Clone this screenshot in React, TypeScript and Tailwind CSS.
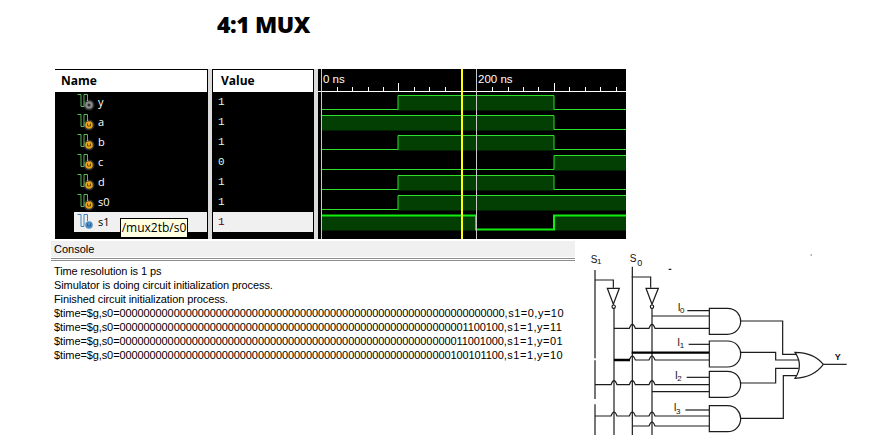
const rows = [
  { name: "y", value: "1", kind: "out" },
  { name: "a", value: "1", kind: "in" },
  { name: "b", value: "1", kind: "in" },
  { name: "c", value: "0", kind: "in" },
  { name: "d", value: "1", kind: "in" },
  { name: "s0", value: "1", kind: "in" },
  { name: "s1", value: "1", kind: "sel" },
];

// level changes per signal, x in page pixels
const waves: { start: number; edges: number[] }[] = [
  { start: 0, edges: [398, 554] },
  { start: 1, edges: [554] },
  { start: 0, edges: [398, 554] },
  { start: 0, edges: [554] },
  { start: 0, edges: [398, 554] },
  { start: 0, edges: [398] },
  { start: 1, edges: [476, 554] },
];

const X0 = 318;
const X1 = 626;
const ticks = [337, 352, 368, 383, 398, 414, 429, 445, 492, 508, 523, 538, 554, 569, 585, 600, 616];

function SignalIcon({ kind }: { kind: string }) {
  const line = kind === "sel" ? "#3f86b8" : "#58b858";
  const fill = kind === "out" ? "#8a8a8a" : kind === "sel" ? "#4f8fc4" : "#e8a41c";
  return (
    <svg width="18" height="18" viewBox="0 0 18 18" className="shrink-0">
      <path d="M0.5 1.5H4V13.5H7V1.5H10.5V8" fill="none" stroke={line} strokeWidth="1" />
      {kind !== "sel" && <circle cx="12" cy="12" r="5.5" fill="#ffffff" opacity="0.18" />}
      <circle cx="12" cy="12" r="3.8" fill={fill} />
      {kind === "out" ? (
        <path d="M10.5 12H13.5M12 10.5V13.5" stroke="#111111" strokeWidth="1" />
      ) : (
        <path d="M10.5 10.5V13H13.5V10.5" fill="none" stroke={kind === "sel" ? "#2d5f8c" : "#6b4a00"} strokeWidth="1" />
      )}
    </svg>
  );
}

function Waveforms() {
  return (
    <svg width="308" height="170" viewBox={`${X0} 69 308 170`} className="block bg-black">
      <text x="323" y="83" fill="#ffffff" fontSize="11.5" fontFamily="'Liberation Sans', sans-serif">0 ns</text>
      <text x="478" y="83" fill="#ffffff" fontSize="11.5" fontFamily="'Liberation Sans', sans-serif">200 ns</text>
      <path d="M318 91.5H626" stroke="#ffffff" />
      {ticks.map((x) => (
        <path key={x} d={`M${x + 0.5} ${x === 398 || x === 554 ? 83 : 87}V91`} stroke="#ffffff" />
      ))}
      {waves.map((w, i) => {
        const hi = 95.5 + i * 20;
        const lo = 109.5 + i * 20;
        const bounds = [X0 + 4, ...w.edges, X1];
        let level = w.start;
        let d = `M${bounds[0]} ${level ? hi : lo}`;
        const fills: { a: number; b: number }[] = [];
        for (let k = 0; k < bounds.length - 1; k++) {
          if (level) fills.push({ a: bounds[k], b: bounds[k + 1] });
          d += `H${bounds[k + 1]}`;
          if (k < bounds.length - 2) {
            level = level ? 0 : 1;
            d += `V${level ? hi : lo}`;
          }
        }
        return (
          <g key={i}>
            {fills.map((f) => (
              <rect key={f.a} x={f.a} y={hi} width={f.b - f.a} height="15" fill="#033f03" />
            ))}
            <path d={d} fill="none" stroke={i === 6 ? "#10ee10" : "#2ce02c"} strokeWidth={i === 6 ? 2 : 1} />
          </g>
        );
      })}
      <path d="M321.5 69V239M476.5 69V239" stroke="#c8c8c8" />
      <rect x="461" y="69" width="2" height="170" fill="#ffff00" />
    </svg>
  );
}

const consoleLines = [
  "Time resolution is 1 ps",
  "Simulator is doing circuit initialization process.",
  "Finished circuit initialization process.",
];

const timeLines = [
  { bits: "0".repeat(64), tail: ",s1=0,y=10" },
  { bits: "0".repeat(57) + "1100100", tail: ",s1=1,y=11" },
  { bits: "0".repeat(56) + "11001000", tail: ",s1=1,y=01" },
  { bits: "0".repeat(55) + "100101100", tail: ",s1=1,y=10" },
];

function hop(x0: number, x1: number, y: number, hops: number[]) {
  let d = `M${x0} ${y}`;
  for (const x of hops) d += `H${x - 9}Q${x} ${y - 24} ${x + 9} ${y}`;
  return d + `H${x1}`;
}

function andGate(top: number) {
  return `M388 ${top}H442C470 ${top} 482 ${top + 22} 482 ${top + 39}C482 ${top + 58} 468 ${top + 78} 442 ${top + 78}H388Z`;
}

// coordinates are three times the page pixels
function Circuit() {
  const wires = [
    "M45 75V340M45 346V462M45 478V570",
    "M157 65V570",
    "M102 190V570",
    "M216 190V570",
    "M45 105H100V128",
    "M155 96H212V128",
    "M322 197H388M216 213H388",
    hop(102, 388, 250, [157, 216]),
    "M326 298H388",
    hop(150, 388, 345, [157, 216]),
    "M320 397H388",
    hop(45, 388, 419, [102, 157, 216]),
    "M216 440H388",
    "M316 495H388",
    hop(45, 388, 513, [102, 157, 216]),
    hop(157, 388, 543, [216]),
    "M482 228H608V328H652",
    "M482 322H587V345H656",
    "M482 414H587V370H656",
    "M482 520H610V392H652",
    "M730 358H800",
    "M266 73H274M692 30H695",
  ];
  const label = "'Liberation Sans', sans-serif";
  return (
    <svg width="290" height="193" viewBox="0 0 870 579" className="mt-[4px] block shrink-0">
      <g fill="none" stroke="#1c1c1c" strokeWidth="3.6">
        {wires.map((d) => (
          <path key={d} d={d} />
        ))}
        <path d="M155 323H388M102 345H150" strokeWidth="7" stroke="#000000" />
        {[190, 288, 379, 482].map((t) => (
          <path key={t} d={andGate(t)} fill="#ffffff" />
        ))}
        <path d="M82 130H118L100 178ZM198 130H235L216 178Z" fill="#ffffff" />
        <circle cx="101" cy="185" r="5" fill="#ffffff" />
        <circle cx="216" cy="185" r="5" fill="#ffffff" />
        <path d="M645 322C690 322 715 340 730 358C715 378 690 398 645 400C662 375 662 347 645 322Z" fill="#ffffff" />
      </g>
      <g fill="#111111" fontFamily={label} fontSize="30">
        <text x="32" y="54">S</text>
        <text x="51" y="56" fontSize="24">1</text>
        <text x="149" y="52">S</text>
        <text x="172" y="62" fontSize="27">0</text>
        <text x="293" y="197">I</text>
        <text x="300" y="204" fontSize="24">0</text>
        <text x="292" y="303">I</text>
        <text x="299" y="309" fontSize="24">1</text>
        <text x="285" y="402">I</text>
        <text x="292" y="409" fontSize="24">2</text>
        <text x="281" y="499">I</text>
        <text x="288" y="507" fontSize="24">3</text>
        <text x="764" y="346" fontSize="27" fontWeight="700">Y</text>
      </g>
    </svg>
  );
}

export default function App() {
  return (
    <div className="h-[438px] w-[870px] overflow-hidden bg-white font-['Liberation_Sans',sans-serif]">
      <div className="flex h-[69px] w-[527px] justify-center pt-[6px] font-['Open_Sans',sans-serif]">
        <h1 className="text-[23px] leading-[36px] font-extrabold tracking-[-0.4px] text-black">4:1 MUX</h1>
      </div>

      <div className="relative ml-[55px] flex h-[170px] w-[571px] bg-[#dcdcdc]">
        <div className="w-[153px] bg-black pr-px">
          <div className="mt-px flex h-[22px] items-center bg-white pl-[6px] font-['Open_Sans',sans-serif] text-[12px] font-bold text-black">
            Name
          </div>
          {rows.map((r) => (
            <div
              key={r.name}
              className={
                r.kind === "sel"
                  ? "ml-[19px] flex h-5 items-center gap-[3px] bg-[#f0f0f0] pl-[3px] font-['Open_Sans',sans-serif] text-[11px] text-black"
                  : "ml-[19px] flex h-5 items-center gap-[3px] pl-[3px] font-['Open_Sans',sans-serif] text-[11px] text-white"
              }
            >
              <SignalIcon kind={r.kind} />
              <span>{r.name}</span>
            </div>
          ))}
        </div>
        <div className="ml-[4px] w-[102px] bg-black px-px">
          <div className="mt-px flex h-[22px] items-center bg-white pl-[8px] font-['Open_Sans',sans-serif] text-[12px] font-bold text-black">
            Value
          </div>
          {rows.map((r) => (
            <div
              key={r.name}
              className={
                r.kind === "sel"
                  ? "flex h-5 items-center bg-[#f0f0f0] pl-[5px] font-['Liberation_Mono',monospace] text-[11px] text-[#600020]"
                  : "flex h-5 items-center pl-[5px] font-['Liberation_Mono',monospace] text-[11px] text-[#d0ffe0]"
              }
            >
              {r.value}
            </div>
          ))}
        </div>
        <div className="ml-[4px]">
          <Waveforms />
        </div>
        <div className="absolute top-[149px] left-[65px] flex h-[20px] w-[68px] items-center justify-center border border-black bg-[#ffffe1] font-['Open_Sans',sans-serif] text-[12px] text-black">
          /mux2tb/s0
        </div>
      </div>

      <div className="mt-[2px] flex">
        <div className="ml-[51px] h-[126px] w-[524px] overflow-hidden">
          <div className="h-[16px] bg-[#f0f0f0] pl-[3px] text-[11px] leading-[16px] text-black">Console</div>
          <div className="mt-px h-[3px] border-y border-[#8c8c8c]" />
          <div className="pt-[3px] pl-[3px] text-[11px] leading-[14px] tracking-[-0.1px] text-black">
            {consoleLines.map((l) => (
              <div key={l} className="whitespace-nowrap">{l}</div>
            ))}
            {timeLines.map((l) => (
              <div key={l.bits} className="whitespace-nowrap">
                $time=$g,s0={l.bits}
                <span className="tracking-[0.5px]">{l.tail}</span>
              </div>
            ))}
          </div>
        </div>
        <div className="ml-[5px]">
          <Circuit />
        </div>
      </div>
    </div>
  );
}
